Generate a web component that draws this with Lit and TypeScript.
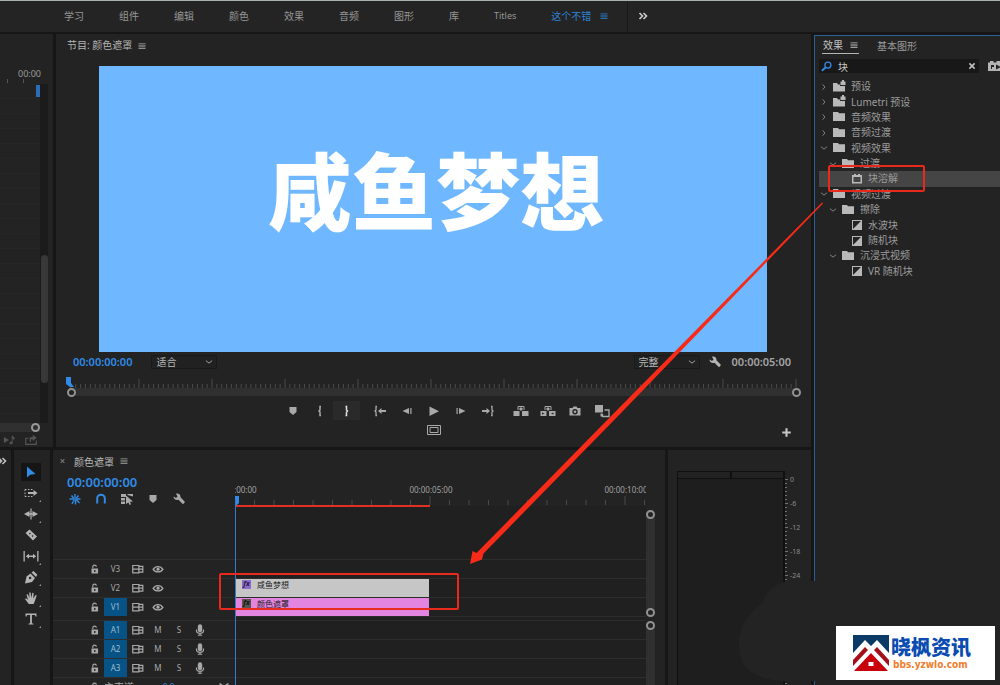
import { LitElement, html, svg, css, nothing } from "lit";
import { customElement, property } from "lit/decorators.js";
import { classMap } from "lit/directives/class-map.js";

const GLYPHS: Record<string, unknown> = {
  menu: svg`<path d="M4 5h8v1H4zM4 7.5h8v1H4zM4 10h8v1H4z"/>`,
  more: svg`<path class="line" stroke-width="1.6" d="M4.5 5l3 3-3 3M8.5 5l3 3-3 3"/>`,
  right: svg`<path class="line" d="M6.5 5l2.500 3-2.500 3"/>`,
  down: svg`<path class="line" d="M4.500 6.500l3.500 2.800 3.500-2.800"/>`,
  folder: svg`<path d="M2 3h5l1 1.200h6V12H2z"/>`,
  preset: svg`<path d="M2 4h4l1 1.500h2V7h5v5.500H2z"/><path d="M9.500 2.500h1.500V1h2v1.500h1.500V6h-5z"/>`,
  effect: svg`<path fill-rule="evenodd" d="M3 4h2V3h2v1h2V3h2v1h2v8.500H3zM4.500 6v5h7V6z"/>`,
  transition: svg`<path fill-rule="evenodd" d="M3 3h10v10H3zM4 4v8l8-8z"/>`,
  search: svg`<circle class="line" cx="9.500" cy="6.500" r="3.200" stroke-width="1.400"/><path class="line" stroke-width="2" d="M7 9l-4 3.500"/>`,
  close: svg`<path class="line" stroke-width="1.700" d="M5 5l6 6M11 5l-6 6"/>`,
  accel: svg`<path fill-rule="evenodd" d="M1 4.500h2V3h3.500v1.500h3V3H13v1.500h2V13H1zM4 7v4h1V9h2V7zM9 6.500v5l5-2.500z"/>`,
  marker: svg`<path d="M4.500 4h7v5L8 12 4.500 9z"/>`,
  markIn: svg`<path class="line" stroke-width="1.500" d="M9 3.500H8V7L7 8l1 1v3.500h1"/>`,
  markOut: svg`<path class="line" stroke-width="1.500" d="M6.500 3.500H7.500V7l1 1-1 1v3.500h-1"/>`,
  goIn: svg`<path class="line" stroke-width="1.300" d="M5 3.500H4V7L3 8l1 1v3.500h1"/><path d="M6 8l3.500-3v2H14v2H9.500v2z"/>`,
  goOut: svg`<path class="line" stroke-width="1.300" d="M11 3.500h1V7l1 1-1 1v3.500h-1"/><path d="M10 8L6.500 5v2H2v2h4.500v2z"/>`,
  stepBack: svg`<path d="M10 5v6L3.500 8zM11.300 5h1.200v6h-1.200z"/>`,
  stepFwd: svg`<path d="M6 5v6l6.500-3zM3.500 5h1.200v6H3.500z"/>`,
  play: svg`<path d="M3.500 3.500v9.500l9.500-4.700z"/>`,
  lift: svg`<path d="M.5 8h6v5h-6zM9 8h6.500v5H9z"/><path class="line" d="M5 7V3.500h6V7M6 6h4"/><path d="M7 4.500h2v3H7z"/>`,
  extract: svg`<path fill-rule="evenodd" d="M.5 8h6v5h-6zM2 9.500v2l2.500-1zM9 8h6.500v5H9zM13.500 9.500v2L11 10.500z"/><path class="line" d="M5 7V3.500h6V7M6 6h4"/><path d="M7 4.500h2v3H7z"/>`,
  camera: svg`<path fill-rule="evenodd" d="M2.500 5h3l1-1.500h3l1 1.500h3v7.500h-11zM8 6a2.700 2.700 0 100 5.400A2.700 2.700 0 008 6z"/><circle cx="8" cy="8.700" r="1.300"/>`,
  compare: svg`<path d="M1 2h8v7.500H1z"/><path class="line" stroke-width="1.300" d="M10.500 7H15v6.500H8.500V11"/><path d="M6.500 10.500h2v3h-2z"/>`,
  safe: svg`<path class="line" d="M1.500 3.500h13v9h-13z"/><path class="line" d="M4 5.500h8v5H4z"/>`,
  plus: svg`<path d="M7 4h2v3h3v2H9v3H7V9H4V7h3z"/>`,
  wrench: svg`<path d="M2.500 5.500L5 7l1.500-1.500L5 2.800c2-1 5 .7 4.500 3.500L14 11l-2 2.300L7.500 8.800C5 9.500 2.300 8 2.500 5.500z"/>`,
  select: svg`<path d="M4 2.500v11l3.200-2.700 5.300-.8z"/>`,
  trackSelect: svg`<path class="line" stroke-dasharray="1.500 1.500" d="M2 4.500h8M2 11.500h8M2 4.500v7"/><path d="M5 7h5.500V5L14.500 8l-4 3V9H5z"/>`,
  ripple: svg`<path d="M7.400 2.500h1.200v11H7.400zM6.500 5v2.300H9.500V5L15 8l-5.500 3V8.700h-3V11L1 8z"/>`,
  razor: svg`<path fill-rule="evenodd" d="M2.500 6L6.500 2.500l7.500 7L10 13.500zM6 6.500l.9.900 1-1L7 5.500zM8.600 9l.9.900 1-1-.9-.9z"/>`,
  slip: svg`<path d="M.5 3h1.300v10.500H.5zM14.200 3h1.300v10.500h-1.300zM2.800 8.200L6 5.700v1.900h4V5.700l3.200 2.500L10 10.800V8.900H6v1.900z"/>`,
  pen: svg`<path fill-rule="evenodd" d="M2 14.500l1.500-7 4-3 4.500 4.500-3 4zM7.500 7.800a1.200 1.200 0 100 2.300 1.200 1.200 0 000-2.300z"/><path d="M8.500 3.500l2-1.500 3.800 3.800L13 8z"/>`,
  hand: svg`<path d="M5.800 14L2 9l1-.8 2 1.600L3.500 4.500l1.300-.3L6.500 8 6.200 2.500h1.400L8.400 8l.9-5.200 1.300.2L10.300 8.400 12.500 5l1.200.6L12 10.500 10.700 14z"/>`,
  type: svg`<path d="M2.500 2.500h11v3h-1l-.5-1.600H8.900v8.400l1.600.4v.8h-5v-.8l1.600-.4V3.900H4L3.500 5.500h-1z"/>`,
  nest: svg`<path class="line" stroke-width="1.400" d="M2.500 8h11M8 3v4M4.500 4.500l2 2.500M11.500 4.500l-2 2.500M5 13l2-4M8.500 9v4.500M12.500 12l-3-3"/>`,
  magnet: svg`<path class="line" stroke-width="2" d="M4.200 12.500V7.500a3.800 3.800 0 017.600 0v5"/>`,
  linked: svg`<path d="M2 3h5v3H2zM8.500 3H14v2.500L8.500 4zM2 7h4v2.500H2zM2 10.500h4V13H2zM7 4.500l7 6-3 .3 1 2.500-1.400.6-1.200-2.500L7 13z"/>`,
  lock: svg`<path fill-rule="evenodd" d="M4 7.500h7.500v5.500H4zM7 9v2.500h1.500V9z"/><path class="line" stroke-width="1.300" d="M5.500 7V5.300C5.500 3 9.500 3 9.500 5.300"/>`,
  sync: svg`<path class="line" stroke-width="1.400" d="M2 4h7v8.500H2zM2 8.200h12M9 5h4.500v6.500H9"/>`,
  eye: svg`<path class="line" stroke-width="1.600" d="M2.500 8.300c2.500-4 8.500-4 11 0-2.500 4-8.500 4-11 0z"/><circle cx="8" cy="8.200" r="1.800"/>`,
  mic: svg`<rect x="5.500" y="1.500" width="5" height="9" rx="2.500"/><path class="line" stroke-width="1.400" d="M4 7.500v1c0 4.300 8 4.300 8 0v-1M8 11.500V14M5.500 14h5"/>`,
  bowtie: svg`<path d="M3 3l5 3.500L13 3v10L8 9.500 3 13z"/>`,
  playAudio: svg`<path d="M1 4.500v7L7 8z"/><path d="M10 3h1l2.500 3-1 2L11 6v5.500a1.800 1.500 0 11-1-1.500z"/>`,
  share: svg`<path class="line" stroke-width="1.300" d="M5 6H2v7h12V8.500"/><path d="M10 2l4.500 3.500L10 9V7H8v3H6.500V4.800H10z"/>`,
};

@customElement("ui-icon")
class UiIcon extends LitElement {
  @property() name = "";
  static styles = css`
    :host { display: inline-flex; flex: none; width: 16px; height: 16px; }
    :host([name="menu"]) { width: 14px; height: 14px; }
    svg { width: 100%; height: 100%; fill: currentColor; }
    .line { fill: none; stroke: currentColor; }
  `;
  render() {
    return html`<svg viewBox="0 0 16 16" aria-hidden="true">${GLYPHS[this.name] ?? nothing}</svg>`;
  }
}

const base = css`
  * { box-sizing: border-box; }
  button { font: inherit; color: inherit; background: none; border: 0; padding: 0; margin: 0; display: flex; align-items: center; justify-content: center; white-space: nowrap; }
  ul { list-style: none; margin: 0; padding: 0; }
`;

@customElement("workspace-bar")
class WorkspaceBar extends LitElement {
  static styles = [base, css`
    :host { display: flex; height: 34px; padding-left: 64px; background: #242424; border-top: 1px solid #a9b3ae; border-bottom: 2px solid #161616; color: #969696; font-size: 10px; }
    nav { display: flex; gap: 35px; padding-bottom: 2px; }
    .active { color: #2d83d6; gap: 6px; }
    .latin { font-size: 9px; }
    .more { margin-left: 16px; width: 24px; padding: 0 0 2px 7px; border-left: 1px solid #181818; color: #cfcfcf; }
  `];
  render() {
    const names = ["学习", "组件", "编辑", "颜色", "效果", "音频", "图形", "库"];
    return html`
      <nav aria-label="工作区">
        ${names.map((n) => html`<button>${n}</button>`)}
        <button class="latin">Titles</button>
        <button class="active">这个不错<ui-icon name="menu"></ui-icon></button>
      </nav>
      <button class="more" aria-label="更多"><ui-icon name="more"></ui-icon></button>`;
  }
}

@customElement("source-strip")
class SourceStrip extends LitElement {
  static styles = [base, css`
    :host { display: flex; flex-direction: column; background: #232323; color: #9a9a9a; overflow: hidden; }
    .time { height: 50px; padding: 34px 12px 0 0; text-align: right; font-size: 9px; line-height: 12px; background: linear-gradient(#555, #555) 7px 45px / 1px 4px no-repeat, linear-gradient(#555, #555) 23px 45px / 1px 4px no-repeat; }
    .body { flex: 1; display: grid; grid-template-columns: 1fr 8px 5px; }
    .rows { display: flex; flex-direction: column; background: repeating-linear-gradient(#232323 0 14px, #262626 14px 15px); }
    .key { align-self: flex-end; width: 4px; height: 12px; margin-top: 1px; background: #2a6fb5; }
    .track { background: #1b1b1b; display: flex; flex-direction: column; justify-content: flex-end; align-items: center; padding-bottom: 40px; }
    .thumb { width: 7px; height: 128px; border-radius: 4px; background: #383838; }
    .zoom { height: 9px; width: 40px; background: #303030; display: flex; align-items: center; justify-content: flex-end; }
    .knob { width: 9px; height: 9px; border: 2px solid #9a9a9a; border-radius: 50%; }
    .foot { height: 15px; display: flex; gap: 7px; align-items: center; padding-left: 3px; color: #555; }
    .foot ui-icon { width: 14px; height: 14px; }
  `];
  render() {
    return html`
      <div class="time">00:00</div>
      <div class="body"><div class="rows"><span class="key"></span></div><div class="track"><span class="thumb"></span></div></div>
      <div class="zoom"><span class="knob"></span></div>
      <div class="foot"><ui-icon name="playAudio"></ui-icon><ui-icon name="share"></ui-icon></div>`;
  }
}

@customElement("program-monitor")
class ProgramMonitor extends LitElement {
  static styles = [base, css`
    :host { display: flex; flex-direction: column; background: #232323; color: #b4b4b4; font-size: 10px; min-width: 0; }
    header { height: 32px; padding: 3px 0 0 11px; display: flex; gap: 3px; line-height: 16px; }
    header ui-icon { margin-top: 2px; }
    .video { flex: 1; margin: 0 44px 0 43px; background: #6fb8ff; display: flex; align-items: center; justify-content: center; }
    .title { margin: 0 0 34px; padding-left: 6px; color: #fff; font-size: 84px; line-height: 96px; font-weight: 900; }
    .info { height: 20px; padding: 0 20px 0 17px; display: flex; align-items: center; }
    .code { font-size: 11px; line-height: 16px; font-weight: 600; color: #2f8be6; }
    .length { color: #a3a3a3; margin-left: 9px; }
    .pick { display: flex; align-items: center; width: 66px; height: 14px; margin-left: 19px; border: 1px solid #191919; background: #212121; position: relative; }
    .pick.last { margin-left: auto; margin-right: 7px; }
    select { appearance: none; width: 100%; height: 12px; border: 0; background: none; color: #b8b8b8; font: inherit; line-height: 12px; padding: 0 0 0 4px; }
    .pick ui-icon { position: absolute; right: 0; width: 14px; height: 14px; pointer-events: none; }
    .ruler { height: 17px; margin: 0 15px 0 10px; display: block; width: calc(100% - 25px); overflow: visible; }
    .ruler line { stroke: #4a4a4a; }
    .scrub { height: 8px; margin: -1px 10px 0 11px; border-radius: 4px; background: #303030; display: flex; justify-content: space-between; align-items: center; }
    .knob { width: 9px; height: 9px; border: 2px solid #929292; border-radius: 50%; background: #232323; }
    .transport { margin-top: 5px; display: grid; grid-template-columns: 1fr auto 1fr; column-gap: 6px; }
    .group { display: flex; }
    .group.end { justify-content: flex-end; }
    .group button { width: 27px; height: 19px; color: #a9a9a9; }
    .group .on { background: #2a2a2a; color: #e4e4e4; }
    .bottom { height: 27px; display: grid; grid-template-columns: 1fr auto 1fr; align-items: start; color: #a9a9a9; padding: 2px 16px 0; }
    .bottom .plus { grid-column: 3; justify-self: end; color: #c6c6c6; margin-top: 2px; }
    .plus ui-icon { width: 17px; height: 17px; }
    .bottom .safe { grid-column: 2; }
  `];
  private group(names: string[], extra = "") {
    return html`<div class="group ${extra}">${names.map((n) => html`
      <button aria-label=${n} class=${classMap({ on: n === "markOut" })}><ui-icon name=${n}></ui-icon></button>`)}</div>`;
  }
  render() {
    const ticks = Array.from({ length: 150 }, (_, i) => i + 1);
    return html`
      <header>节目: 颜色遮罩<ui-icon name="menu"></ui-icon></header>
      <div class="video"><h1 class="title">咸鱼梦想</h1></div>
      <div class="info">
        <span class="code">00:00:00:00</span>
        <label class="pick"><select aria-label="缩放级别"><option>适合</option></select><ui-icon name="down"></ui-icon></label>
        <label class="pick last"><select aria-label="回放分辨率"><option>完整</option></select><ui-icon name="down"></ui-icon></label>
        <ui-icon name="wrench"></ui-icon>
        <span class="code length">00:00:05:00</span>
      </div>
      <svg class="ruler">
        ${ticks.map((i) => {
          const x = `${(i / 150) * 100}%`;
          return svg`<line x1=${x} x2=${x} y1=${i % 15 ? 12 : 7} y2="16"/>`;
        })}
        <path fill="#2f8be6" d="M0 5h5v6l3 4H4L0 12z"/>
      </svg>
      <div class="scrub"><span class="knob"></span><span class="knob"></span></div>
      <div class="transport">
        ${this.group(["marker", "markIn", "markOut"], "end")}
        ${this.group(["goIn", "stepBack", "play", "stepFwd", "goOut"])}
        ${this.group(["lift", "extract", "camera", "compare"])}
      </div>
      <div class="bottom">
        <button class="safe" aria-label="安全边距"><ui-icon name="safe"></ui-icon></button>
        <button class="plus" aria-label="按钮编辑器"><ui-icon name="plus"></ui-icon></button>
      </div>`;
  }
}

interface Node { text: string; icon: string; level: number; open?: boolean; selected?: boolean }
const TREE: Node[] = [
  { text: "预设", icon: "preset", level: 0, open: false },
  { text: "Lumetri 预设", icon: "preset", level: 0, open: false },
  { text: "音频效果", icon: "folder", level: 0, open: false },
  { text: "音频过渡", icon: "folder", level: 0, open: false },
  { text: "视频效果", icon: "folder", level: 0, open: true },
  { text: "过渡", icon: "folder", level: 1, open: true },
  { text: "块溶解", icon: "effect", level: 2, selected: true },
  { text: "视频过渡", icon: "folder", level: 0, open: true },
  { text: "擦除", icon: "folder", level: 1, open: true },
  { text: "水波块", icon: "transition", level: 2 },
  { text: "随机块", icon: "transition", level: 2 },
  { text: "沉浸式视频", icon: "folder", level: 1, open: true },
  { text: "VR 随机块", icon: "transition", level: 2 },
];

@customElement("effects-panel")
class EffectsPanel extends LitElement {
  static styles = [base, css`
    :host { display: block; background: #232323; border: solid #2a6098; border-width: 1px 0 0 1px; color: #9c9c9c; font-size: 10px; overflow: hidden; }
    .tabs { display: flex; gap: 18px; height: 19px; padding-left: 7px; }
    .tab { height: 18px; }
    .tab.on { color: #c4c4c4; gap: 4px; width: 37px; justify-content: flex-start; padding-left: 1px; border-bottom: 1px solid #b4b4b4; }
    .find { display: flex; align-items: center; margin-top: 3px; height: 16px; }
    .box { flex: 1; min-width: 0; display: flex; align-items: center; height: 14px; margin-left: 4px; background: #181818; }
    .box ui-icon { color: #2f8be6; width: 15px; height: 15px; }
    .box button ui-icon { color: #c4c4c4; width: 14px; height: 14px; }
    input { flex: 1; width: 0; min-width: 0; height: 14px; border: 0; padding: 0 4px; background: none; color: #c8c8c8; font: inherit; outline: 0; }
    .accel { margin: 0 -3px 0 8px; color: #b4b4b4; }
    .tree { margin-top: 5px; height: 200px; display: grid; grid-auto-rows: minmax(0, 1fr); }
    .row { display: flex; align-items: center; padding-left: 4px; margin-left: 4px; white-space: nowrap; line-height: 15px; }
    .row.selected { background: #454545; }
    .level1 { padding-left: 13px; }
    .level2 { padding-left: 31px; }
    .row button { width: 14px; margin: 0 -1px 0 -6px; color: #8f8f8f; }
    .row > ui-icon { color: #b9b9b9; margin: 0 4px 0 1px; }
    .row button ui-icon { width: 14px; height: 14px; }
    .level2 > ui-icon { margin-left: -1px; margin-right: 3px; }
  `];
  render() {
    return html`
      <div class="tabs"><button class="tab on">效果<ui-icon name="menu"></ui-icon></button><button class="tab">基本图形</button></div>
      <div class="find">
        <div class="box"><ui-icon name="search"></ui-icon><input aria-label="搜索效果" value="块"><button aria-label="清除"><ui-icon name="close"></ui-icon></button></div>
        <button class="accel" aria-label="加速效果"><ui-icon name="accel"></ui-icon></button>
      </div>
      <ul class="tree">
        ${TREE.map((n) => html`<li class=${classMap({ row: true, [`level${n.level}`]: true, selected: !!n.selected })}>
          ${n.open === undefined ? nothing : html`<button aria-label="展开"><ui-icon name=${n.open ? "down" : "right"}></ui-icon></button>`}
          <ui-icon name=${n.icon}></ui-icon><span>${n.text}</span></li>`)}
      </ul>`;
  }
}

@customElement("tool-bar")
class ToolBar extends LitElement {
  static styles = [base, css`
    :host { display: flex; flex-direction: column; align-items: center; gap: 3px; padding: 13px 2px 0 0; background: #232323; }
    button { width: 20px; height: 18px; color: #b4b4b4; position: relative; }
    button.on { background: #151515; color: #2f8be6; }
    .sub::after { content: ""; position: absolute; right: 0; bottom: 0; border: 1px solid; border-color: transparent #9a9a9a #9a9a9a transparent; }
  `];
  render() {
    const tools = ["select", "trackSelect", "ripple", "razor", "slip", "pen", "hand", "type"];
    return tools.map((t, i) => html`<button aria-label=${t} class=${classMap({ on: i === 0, sub: i !== 0 && t !== "razor" })}><ui-icon name=${t}></ui-icon></button>`);
  }
}

const SECOND = 39;

@customElement("timeline-panel")
class TimelinePanel extends LitElement {
  static styles = [base, css`
    :host { display: grid; grid-template-columns: 182px 1fr 19px; background: #232323; color: #a8a8a8; font-size: 10px; overflow: hidden; min-width: 0; }
    .top { height: 109px; }
    .tab { display: flex; align-items: center; height: 22px; padding-left: 3px; }
    .tab .x { width: 13px; height: 10px; color: #777; }
    .tab span { margin: 0 3px 0 5px; color: #b8b8b8; }
    .code { padding-left: 14px; height: 19px; font-size: 13px; line-height: 20px; font-weight: 600; color: #2f8be6; }
    .opts { display: flex; gap: 10px; padding-left: 14px; height: 16px; }
    .blue { color: #2f8be6; }
    .track { display: grid; grid-template-columns: 51px 23px 21px 20px 22px 20px; height: 19px; border-top: 1px solid #2e2e2e; align-items: center; justify-items: center; font-size: 8px; line-height: 18px; }
    .track ui-icon { width: 14px; height: 14px; }
    .track > :first-child { justify-self: end; margin-right: 2px; width: 14px; }
    .name { width: 23px; height: 18px; text-align: center; }
    .patched { background: #075385; color: #9cbcd2; }
    .audio { margin-top: 4px; }
    .main .name { width: auto; font-size: 10px; white-space: nowrap; justify-self: start; }
    .main .level { grid-column: 5; color: #2f8be6; justify-self: start; }
    .main .bow { grid-column: 6; }
    .main { grid-template-columns: 51px 23px 21px 15px 54px 14px; }
    .lanes { overflow: hidden; position: relative; background: linear-gradient(#232323 56px, #202020 56px); }
    .lanes::after { content: ""; position: absolute; left: 0; top: 50px; bottom: 0; border-left: 1px solid #2f7fd0; }
    .scale { display: block; width: 100%; height: 58px; font-size: 8px; fill: #a2a2a2; }
    .scale line { stroke: #4a4a4a; }
    .scale .work { stroke: #e03022; stroke-width: 2; }
    .gap { height: 51px; }
    .lane { height: 19px; border-top: 1px solid #2d2d2d; }
    .gutter { height: 4px; border-top: 1px solid #2d2d2d; }
    .clip { height: 18px; display: flex; align-items: flex-start; gap: 6px; padding: 1px 0 0 7px; background: #c6c6c6; color: #222; font-size: 8px; line-height: 9px; white-space: nowrap; }
    .clip.matte { background: #e384e1; }
    .fx { width: 9px; height: 9px; font-size: 7px; line-height: 8px; font-style: italic; font-weight: 700; text-align: center; background: #8c6cc8; color: #241840; }
    .matte .fx { background: #56564e; color: #111; }
    .bars { padding-top: 60px; display: flex; flex-direction: column; gap: 4px; align-items: flex-start; }
    .bar { flex: none; width: 9px; height: 107px; background: #303030; border-radius: 4px; display: flex; flex-direction: column; justify-content: space-between; }
    .knob { width: 9px; height: 9px; border: 2px solid #929292; border-radius: 50%; background: #232323; }
  `];
  private head(name: string, audio: boolean, patched: boolean, first = false) {
    return html`<div class=${classMap({ track: true, audio: first })}>
      <button aria-label="锁定"><ui-icon name="lock"></ui-icon></button>
      <button class=${classMap({ name: true, patched })}>${name}</button>
      <button aria-label="同步锁定"><ui-icon name="sync"></ui-icon></button>
      ${audio
        ? html`<button>M</button><button>S</button><button aria-label="录音"><ui-icon name="mic"></ui-icon></button>`
        : html`<button aria-label="显示"><ui-icon name="eye"></ui-icon></button>`}
    </div>`;
  }
  render() {
    const ticks = Array.from({ length: 60 }, (_, i) => i + 1);
    return html`
      <section>
        <div class="top">
          <div class="tab"><button class="x" aria-label="关闭"><ui-icon class="x" name="close"></ui-icon></button><span>颜色遮罩</span><ui-icon name="menu"></ui-icon></div>
          <div class="code">00:00:00:00</div>
          <div class="opts">
            <ui-icon class="blue" name="nest"></ui-icon><ui-icon class="blue" name="magnet"></ui-icon><ui-icon name="linked"></ui-icon><ui-icon name="marker"></ui-icon><ui-icon name="wrench"></ui-icon>
          </div>
        </div>
        ${this.head("V3", false, false)}${this.head("V2", false, false)}${this.head("V1", false, true)}
        ${this.head("A1", true, true, true)}${this.head("A2", true, true)}${this.head("A3", true, true)}
        <div class="track main"><ui-icon name="lock"></ui-icon><span class="name">主声道</span><span class="level">0.0</span><ui-icon class="bow" name="bowtie"></ui-icon></div>
      </section>
      <section class="lanes">
        <svg class="scale">
          <text x="-1" y="43">:00:00</text>
          <text x=${5 * SECOND + 1} y="43" text-anchor="middle">00:00:05:00</text>
          <text x=${10 * SECOND + 1} y="43" text-anchor="middle">00:00:10:00</text>
          ${ticks.map((i) => { const x = (i * SECOND) / 2; return svg`<line x1=${x} x2=${x} y1=${i % 10 ? 50 : 46} y2="55"/>`; })}
          <line class="work" x1="0" x2=${5 * SECOND} y1="56" y2="56"/>
          <path fill="#2f8be6" d="M0 46h4v7l-4 4z"/>
        </svg>
        <div class="gap"></div>
        <div class="lane"></div>
        <div class="lane"><div class="clip" style="width:${5 * SECOND - 1}px"><span class="fx">fx</span>咸鱼梦想</div></div>
        <div class="lane"><div class="clip matte" style="width:${5 * SECOND - 1}px"><span class="fx">fx</span>颜色遮罩</div></div>
        <div class="gutter"></div>
        <div class="lane"></div><div class="lane"></div><div class="lane"></div><div class="lane"></div>
      </section>
      <div class="bars">
        <div class="bar"><span class="knob"></span><span class="knob"></span></div>
        <div class="bar"><span class="knob"></span></div>
      </div>`;
  }
}

@customElement("audio-meter")
class AudioMeter extends LitElement {
  static styles = css`
    :host { display: flex; background: #232323; padding: 21px 0 0 9px; overflow: hidden; color: #8c8c8c; }
    .meter { width: 105px; flex: none; border: solid #101010; border-width: 1px 2px 0 1px; background: #1e1e1e; }
    .peak { height: 6px; border-bottom: 1px solid #101010; background: linear-gradient(90deg, transparent 52px, #101010 52px 54px, transparent 54px) #222; }
    svg { width: 30px; height: 220px; font-size: 7px; fill: currentColor; }
    line { stroke: #707070; }
  `;
  render() {
    const ticks = Array.from({ length: 53 }, (_, i) => i);
    return html`<div class="meter"><div class="peak"></div></div>
      <svg>${ticks.map((i) => svg`<line x1="0" x2=${i % 6 ? 2 : 3} y1=${8.5 + i * 4} y2=${8.5 + i * 4}/>`)}
      ${[0, -6, -12, -18, -24].map((v) => svg`<text x="5" y=${11 - v * 4}>${v}</text>`)}</svg>`;
  }
}

@customElement("site-badge")
class SiteBadge extends LitElement {
  static styles = css`
    :host { display: flex; align-items: center; box-sizing: border-box; width: 159px; height: 54px; padding: 0 0 0 17px; gap: 2px; background: #fff; }
    svg { width: 36px; height: 36px; flex: none; }
    .name { font-size: 20px; line-height: 22px; font-weight: 900; color: #0b4cb0; white-space: nowrap; }
    .url { display: block; padding-left: 2px; font-family: "DejaVu Sans Condensed", "DejaVu Sans", sans-serif; font-size: 10px; line-height: 11px; font-weight: 700; color: #ef7d2c; text-decoration: none; }
  `;
  render() {
    return html`
      <svg viewBox="0 0 36 36"><path fill="#0c3a66" d="M0 0h36v36H0z"/><path fill="#fff" d="M0 18L12 5l6 6 6-6 12 13v18H0z"/><path fill="#a3101a" d="M0 25L12 12l3 3L0 31zM36 25L24 12l-3 3 15 16z"/><path fill="#c8000c" d="M1 36L18 18l17 18z"/><path fill="#fff" d="M15.500 27h5v4h-5z"/></svg>
      <div><div class="name">晓枫资讯</div><a class="url" href="#">bbs.yzwlo.com</a></div>`;
  }
}

@customElement("app-root")
class AppRoot extends LitElement {
  static styles = [base, css`
    :host { display: grid; grid-template-rows: auto 1fr; height: 100vh; min-height: 600px; position: relative; overflow: hidden; background: #161616; font-family: "Noto Sans", "Noto Sans CJK SC", sans-serif; }
    main { display: grid; grid-template-columns: 1fr 186px; column-gap: 3px; min-height: 0; }
    .left { display: grid; grid-template-rows: 1fr 235px; row-gap: 3px; min-height: 0; min-width: 0; }
    .upper { display: grid; grid-template-columns: 53px 1fr; column-gap: 3px; min-height: 0; }
    .lower { display: grid; grid-template-columns: 11px 36px 1fr 143px; column-gap: 3px; min-height: 0; }
    .stub { background: #232323; color: #c0c0c0; justify-content: flex-start; align-items: flex-start; padding-top: 3px; overflow: hidden; }
    .stub ui-icon { margin-left: -6px; }
    effects-panel { margin-top: 1px; }
    .notes { position: absolute; left: 0; top: 0; width: 1000px; height: 685px; pointer-events: none; }
    .notes rect { fill: none; stroke: #e8291c; stroke-width: 2; }
    site-badge { position: absolute; right: 5px; bottom: 5px; }
  `];
  render() {
    return html`
      <workspace-bar></workspace-bar>
      <main>
        <div class="left">
          <div class="upper"><source-strip></source-strip><program-monitor></program-monitor></div>
          <div class="lower">
            <button class="stub" aria-label="展开面板"><ui-icon name="more"></ui-icon></button>
            <tool-bar></tool-bar><timeline-panel></timeline-panel><audio-meter></audio-meter>
          </div>
        </div>
        <effects-panel></effects-panel>
      </main>
      <svg class="notes" viewBox="0 0 1000 685" aria-hidden="true">
        <path fill="#232323" d="M820 581H790C775 583 766 590 762 604C748 612 739 628 739 645C739 667 752 678 780 681H820z"/>
        <path fill="#f82a18" d="M822 202.500L823 203.500L622 412L483.500 553.500L482 559.500L470 564L472.500 551L476.500 553L618 409z"/>
        <rect x="829" y="166" width="95" height="25" rx="1"/>
        <rect x="220" y="574" width="238" height="35" rx="1"/>
      </svg>
      <site-badge></site-badge>`;
  }
}
